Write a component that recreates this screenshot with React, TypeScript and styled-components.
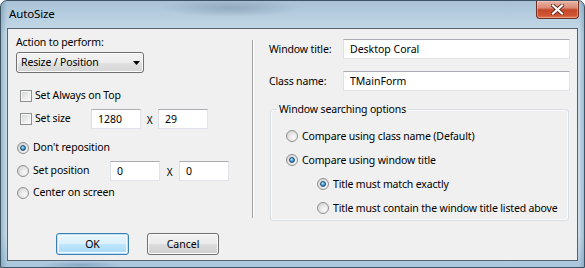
import React from "react";
import styled, { createGlobalStyle, css } from "styled-components";

const GlobalStyle = createGlobalStyle`
  body {
    margin: 0;
    font-family: "Noto Sans", "Open Sans", sans-serif;
    font-size: 10.5px;
    letter-spacing: -0.15px;
    color: #000;
  }
  #root {
    width: 585px;
    height: 268px;
  }
`;

const Window = styled.div`
  width: 585px;
  height: 268px;
  box-sizing: border-box;
  border: 1px solid #3d5466;
  border-radius: 7px 7px 0 0;
  padding: 0 6px 6px;
  display: flex;
  flex-direction: column;
  background:
    radial-gradient(ellipse 70px 9px at 230px 7px, rgba(110, 135, 155, 0.45), transparent),
    radial-gradient(ellipse 40px 4px at 80px 264px, rgba(80, 120, 160, 0.4), transparent),
    linear-gradient(90deg, rgba(70, 120, 140, 0.35) 0, transparent 6px, transparent 578px, rgba(70, 110, 140, 0.3) 583px),
    linear-gradient(180deg, #a8c2d6 0%, #c6dbea 12%, #c9dceb 88%, #a9c6dc 100%);
`;

const TitleBar = styled.div`
  height: 27px;
  display: flex;
  justify-content: space-between;
  align-items: flex-start;
`;

const Title = styled.span`
  padding: 5px 0 0 2px;
  font-size: 11.5px;
  line-height: 15px;
`;

const CloseButton = styled.div`
  width: 43px;
  height: 18px;
  margin-right: -1px;
  box-sizing: border-box;
  border: 1px solid #6b3024;
  border-top: none;
  border-radius: 0 0 4px 4px;
  display: flex;
  align-items: center;
  justify-content: center;
  background: linear-gradient(180deg, #eab3a6 0%, #db8b77 40%, #c4472b 52%, #cf5532 85%, #e07a56 100%);
  box-shadow: inset 0 0 0 1px rgba(255, 210, 200, 0.45);
`;

const Client = styled.div`
  flex: 1;
  border: 1px solid #56636e;
  background: #f0f0f0;
  display: flex;
  flex-direction: column;
`;

const Main = styled.div`
  flex: 1;
  display: flex;
`;

const LeftPane = styled.div`
  width: 244px;
  flex-shrink: 0;
  box-sizing: border-box;
  padding: 6px 0 0 8px;
  display: flex;
  flex-direction: column;
`;

const Divider = styled.div`
  margin-top: 11px;
  height: 178px;
  border-left: 1px solid #a0a0a0;
  border-right: 1px solid #ffffff;
`;

const RightPane = styled.div`
  flex: 1;
  min-width: 0;
  padding: 9px 7px 0 15px;
  display: flex;
  flex-direction: column;
`;

const Text = styled.span`
  line-height: 15px;
  white-space: nowrap;
`;

const Combo = styled.div`
  margin-top: 2px;
  width: 128px;
  height: 21px;
  box-sizing: border-box;
  border: 1px solid #707070;
  border-radius: 3px;
  padding: 0 3px 0 4px;
  display: flex;
  align-items: center;
  justify-content: space-between;
  background: linear-gradient(180deg, #f4f4f4 0%, #ececec 50%, #e0e0e0 51%, #d6d6d6 100%);
  box-shadow: inset 0 0 0 1px #fcfcfc;
`;

const Row = styled.div<{ $mt?: number; $indent?: number; $h?: number }>`
  height: ${(p) => p.$h ?? 21}px;
  margin-top: ${(p) => p.$mt ?? 0}px;
  padding-left: ${(p) => p.$indent ?? 0}px;
  display: flex;
  align-items: center;
`;

const Option = styled.div<{ $width?: number; $offset?: number; $gap?: number }>`
  box-sizing: border-box;
  display: flex;
  align-items: center;
  gap: ${(p) => p.$gap ?? 3}px;
  padding-left: ${(p) => p.$offset ?? 0}px;
  ${(p) =>
    p.$width &&
    css`
      width: ${p.$width}px;
      flex-shrink: 0;
    `}
`;

const CheckBox = styled.span`
  width: 12px;
  height: 12px;
  box-sizing: border-box;
  border: 1px solid #8e8f8f;
  background: linear-gradient(135deg, #cfd2d6 0%, #eeeeee 60%, #fafafa 100%);
  box-shadow: inset 0 0 0 1px #f6f6f6;
  flex-shrink: 0;
`;

const Radio = styled.span<{ $checked?: boolean }>`
  position: relative;
  width: 12px;
  height: 12px;
  box-sizing: border-box;
  border-radius: 50%;
  border: 1px solid #8e8f8f;
  background: radial-gradient(circle at 65% 65%, #fafafa 0%, #e4e4e4 50%, #c9c9c9 100%);
  flex-shrink: 0;
  ${(p) =>
    p.$checked &&
    css`
      &::after {
        content: "";
        position: absolute;
        left: 2px;
        top: 2px;
        width: 6px;
        height: 6px;
        box-sizing: border-box;
        border-radius: 50%;
        border: 1px solid #1d4f77;
        background: radial-gradient(circle at 40% 35%, #c2ecff 0%, #4aa3dc 45%, #1a5b8e 100%);
      }
    `}
`;

const TextBox = styled.input<{ $w?: number }>`
  ${(p) =>
    p.$w
      ? css`
          width: ${p.$w}px;
          flex-shrink: 0;
        `
      : css`
          flex: 1;
          min-width: 0;
        `}
  height: 20px;
  box-sizing: border-box;
  margin: 0;
  padding: 0 0 0 6px;
  border: 1px solid #e2e3ea;
  border-top-color: #abadb3;
  border-left-color: #dbdfe6;
  background: #fff;
  font: inherit;
  color: #000;
  outline: none;
`;

const Times = styled.span<{ $w: number }>`
  width: ${(p) => p.$w}px;
  text-align: center;
  padding-top: 2px;
  font-size: 10px;
  flex-shrink: 0;
`;

const FieldRow = styled.div<{ $mt?: number }>`
  margin-top: ${(p) => p.$mt ?? 0}px;
  height: 22px;
  display: flex;
  align-items: center;
`;

const FieldLabel = styled.span`
  width: 74px;
  flex-shrink: 0;
  white-space: nowrap;
`;

const Group = styled.fieldset`
  margin: 10px 1px 0;
  padding: 0;
  min-width: 0;
  border: 1px solid #d5dfe5;
  border-radius: 3px;
  box-shadow: inset 0 0 0 1px #fbfbfb;
`;

const Legend = styled.legend`
  margin-left: 6px;
  padding: 0 2px;
  line-height: 15px;
`;

const GroupBody = styled.div`
  padding: 7px 0 0 15px;
  display: flex;
  flex-direction: column;
`;

const Footer = styled.div`
  padding: 0 0 5px 48px;
  display: flex;
  gap: 18px;
`;

const Button = styled.button<{ $default?: boolean; $w: number }>`
  width: ${(p) => p.$w}px;
  height: 22px;
  margin: 0;
  padding: 0;
  font: inherit;
  color: #000;
  border-radius: 3px;
  border: 1px solid #707070;
  background: linear-gradient(180deg, #f2f2f2 0%, #ebebeb 50%, #dddddd 51%, #cfcfcf 100%);
  box-shadow: inset 0 0 0 1px #fbfbfb;
  ${(p) =>
    p.$default &&
    css`
      border-color: #3c7fb1;
      background: linear-gradient(180deg, #eaf6fd 0%, #d9f0fc 50%, #bee6fd 51%, #a7d9f5 100%);
      box-shadow: inset 0 0 0 1px #b9e2f8, inset 0 0 0 2px #f2faff;
    `}
`;

const CloseIcon = () => (
  <svg width="13" height="11" viewBox="0 0 13 11">
    <path d="M2 1.5 L11 9.5 M11 1.5 L2 9.5" stroke="#6a2a1e" strokeWidth="4" strokeLinecap="square" />
    <path d="M2 1.5 L11 9.5 M11 1.5 L2 9.5" stroke="#ffffff" strokeWidth="2.2" strokeLinecap="square" />
  </svg>
);

const ComboArrow = () => (
  <svg width="7" height="4" viewBox="0 0 7 4">
    <path d="M0 0 H7 L3.5 4 Z" fill="#000" />
  </svg>
);

const App: React.FC = () => {
  return (
    <>
      <GlobalStyle />
      <Window>
        <TitleBar>
          <Title>AutoSize</Title>
          <CloseButton>
            <CloseIcon />
          </CloseButton>
        </TitleBar>
        <Client>
          <Main>
            <LeftPane>
              <Text>Action to perform:</Text>
              <Combo>
                <Text>Resize / Position</Text>
                <ComboArrow />
              </Combo>

              <Row $mt={12}>
                <Option $offset={4}>
                  <CheckBox />
                  <Text>Set Always on Top</Text>
                </Option>
              </Row>
              <Row $mt={2}>
                <Option $offset={4} $width={75}>
                  <CheckBox />
                  <Text>Set size</Text>
                </Option>
                <TextBox $w={50} defaultValue="1280" readOnly />
                <Times $w={17}>X</Times>
                <TextBox $w={50} defaultValue="29" readOnly />
              </Row>

              <Row $mt={8}>
                <Option $offset={1} $gap={4}>
                  <Radio $checked />
                  <Text>Don't reposition</Text>
                </Option>
              </Row>
              <Row $mt={2}>
                <Option $offset={1} $gap={4} $width={94}>
                  <Radio />
                  <Text>Set position</Text>
                </Option>
                <TextBox $w={50} defaultValue="0" readOnly />
                <Times $w={19}>X</Times>
                <TextBox $w={50} defaultValue="0" readOnly />
              </Row>
              <Row $mt={1}>
                <Option $offset={1} $gap={4}>
                  <Radio />
                  <Text>Center on screen</Text>
                </Option>
              </Row>
            </LeftPane>

            <Divider />

            <RightPane>
              <FieldRow>
                <FieldLabel>Window title:</FieldLabel>
                <TextBox defaultValue="Desktop Coral" readOnly />
              </FieldRow>
              <FieldRow $mt={10}>
                <FieldLabel>Class name:</FieldLabel>
                <TextBox defaultValue="TMainForm" readOnly />
              </FieldRow>

              <Group>
                <Legend>Window searching options</Legend>
                <GroupBody>
                  <Row $h={24}>
                    <Option $gap={4}>
                      <Radio />
                      <Text>Compare using class name (Default)</Text>
                    </Option>
                  </Row>
                  <Row $h={24}>
                    <Option $gap={4}>
                      <Radio $checked />
                      <Text>Compare using window title</Text>
                    </Option>
                  </Row>
                  <Row $h={24} $indent={31}>
                    <Option $gap={4}>
                      <Radio $checked />
                      <Text>Title must match exactly</Text>
                    </Option>
                  </Row>
                  <Row $h={24} $indent={31}>
                    <Option $gap={4}>
                      <Radio />
                      <Text>Title must contain the window title listed above</Text>
                    </Option>
                  </Row>
                </GroupBody>
              </Group>
            </RightPane>
          </Main>

          <Footer>
            <Button $default $w={73}>OK</Button>
            <Button $w={72}>Cancel</Button>
          </Footer>
        </Client>
      </Window>
    </>
  );
};

export default App;
